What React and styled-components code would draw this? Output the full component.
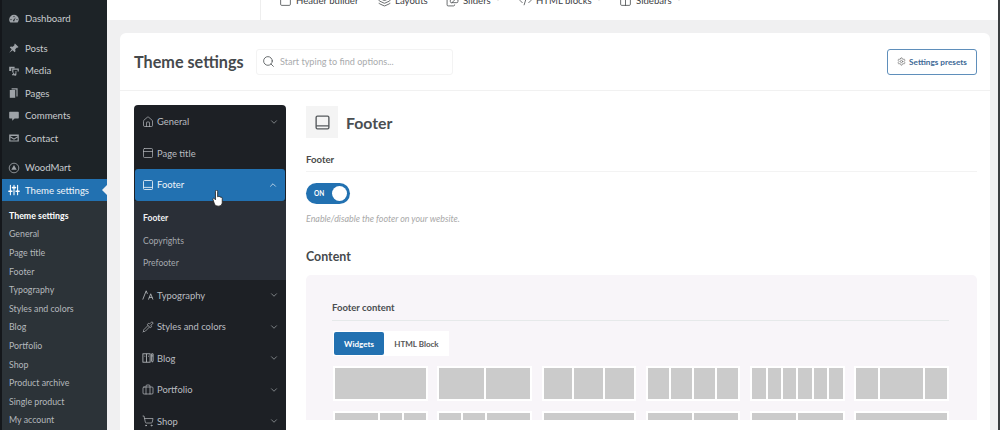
import React from "react";
import styled, { createGlobalStyle } from "styled-components";
import { Home, PanelTop, ChevronDown, ChevronUp, Search, Settings, Briefcase, ShoppingCart, Pipette, Layers, Images, CodeXml, Columns2, Square, ChevronDown as Caret } from "lucide-react";

const Global = createGlobalStyle`
  html, body { margin: 0; padding: 0; background: #f0f0f1; overflow: hidden; }
  * { box-sizing: border-box; }
  body { font-family: "Lato", "Open Sans", sans-serif; }
`;

const Page = styled.div`
  display: flex; width: 1000px; height: 430px; overflow: hidden;
  background: #f0f0f1; border-right: 2px solid #3a3d40;
`;
const Sidebar = styled.aside`
  width: 107px; flex: none; display: flex; flex-direction: column;
  background: #1d2327; border-left: 2px solid #14171b; padding-top: 7.5px;
`;
const SideItem = styled.div`
  display: flex; align-items: center; gap: 5px; height: ${p => p.$h || 22.5}px;
  margin-top: ${p => p.$mt || 0}px; padding-left: 6px; font-size: 9.6px;
  color: ${p => p.$active ? "#f2f6fa" : "#c8cbce"}; background: ${p => p.$active ? "#2271b1" : "transparent"};
  position: relative; white-space: nowrap;
  svg { flex: none; width: 12px; height: 12px; }
  ${p => p.$active ? `&::after { content: ""; position: absolute; right: 0; top: 6px; border: 5px solid transparent; border-right-color: #f0f0f1; border-left: 0; }` : ""}
`;
const SubMenu = styled.div`
  flex: 1; background: #2c3338; padding-top: 5.5px; display: flex; flex-direction: column;
`;
const SubItem = styled.div`
  height: 18.6px; line-height: 18.6px; padding-left: 7px; font-size: 8.8px; white-space: nowrap;
  color: ${p => p.$on ? "#fff" : "#b4b8bc"}; font-weight: ${p => p.$on ? 700 : 400};
`;
const Main = styled.main`
  flex: 1; min-width: 0; display: flex; flex-direction: column;
`;
const TopBar = styled.div`
  height: 20px; flex: none; background: #fff; overflow: hidden; padding-left: 153px;
`;
const TopNav = styled.nav`
  height: 20px; border-left: 1px solid #eee; padding-left: 18px; display: flex; align-items: flex-start;
`;
const TopLink = styled.div`
  display: flex; align-items: center; gap: 4px; height: 14px; margin-top: -7px; width: ${p => p.$w}px;
  font-size: 9.6px; color: #3d4144; white-space: nowrap;
  svg { flex: none; width: 13px; height: 13px; stroke-width: 1.4; }
  svg.caret { width: 6px; height: 6px; color: #aaa; margin-left: 0; }
`;
const Card = styled.section`
  flex: 1; min-height: 0; margin: 13px 8px 0 13px; background: #fff; border-radius: 6px 6px 0 0; overflow: hidden;
`;
const Header = styled.header`
  height: 58px; display: flex; align-items: center; padding: 0 13px 0 14px; border-bottom: 1px solid #f1f1f1;
`;
const Title = styled.h1`
  margin: 0; width: 122px; font-size: 16.2px; font-weight: 700; color: #45494c; white-space: nowrap;
`;
const SearchBox = styled.div`
  width: 197px; height: 26px; display: flex; align-items: center; gap: 5px; padding-left: 5px;
  border: 1px solid #f3f3f3; border-radius: 3px; font-size: 9.1px; color: #a9abad;
  svg { width: 13px; height: 13px; color: #55595c; stroke-width: 1.6; }
`;
const PresetBtn = styled.button`
  margin-left: auto; width: 90px; height: 26px; display: flex; align-items: center; justify-content: center; gap: 3px;
  background: #fff; border: 1px solid #5f8fbb; border-radius: 3px; color: #3e6a96;
  font: 700 8.2px "Lato", sans-serif; white-space: nowrap;
  svg { width: 9px; height: 9px; color: #777; }
`;
const Body = styled.div`
  display: flex; padding: 14px 13px 0 14px; gap: 20px;
`;
const Nav = styled.nav`
  width: 152px; flex: none; height: 340px; background: #1d2025; border-radius: 4px 4px 0 0; position: relative; padding-top: 1px;
`;
const NavRow = styled.div`
  height: 31.5px; margin: 0 ${p => p.$on ? 1 : 0}px; display: flex; align-items: center; gap: 3px; padding-left: ${p => p.$on ? 7 : 8}px; padding-right: 7px;
  background: ${p => p.$on ? "#2271b1" : "transparent"}; border-radius: ${p => p.$on ? 3 : 0}px;
  color: ${p => p.$on ? "#eef4f9" : "#b9bcc0"}; font-size: 9.4px; white-space: nowrap;
  svg { flex: none; width: 12px; height: 12px; stroke-width: 1.4; }
  svg.chev { width: 10px; height: 10px; margin-left: auto; stroke-width: 2; color: #8f9498; }
`;
const NavSub = styled.div`
  background: #2a2f37; height: 79px; padding: 6.5px 0 0 9px; display: flex; flex-direction: column;
`;
const NavSubItem = styled.div`
  height: 22.5px; line-height: 22.5px; font-size: 8.6px; font-weight: ${p => p.$on ? 700 : 400};
  color: ${p => p.$on ? "#eef0f2" : "#a4a8ad"};
`;
const Pointer = styled.svg`
  position: absolute; left: 78px; top: 85px; width: 12px; height: 17px;
`;
const Content = styled.div`
  flex: 1; min-width: 0;
`;
const PageHead = styled.div`
  display: flex; align-items: center; gap: 8px; height: 32px; margin-top: 1px;
`;
const IconBox = styled.div`
  width: 32px; height: 32px; background: #f4f4f4; display: flex; align-items: center; justify-content: center;
  color: #55595c; svg { width: 17px; height: 17px; }
`;
const H2 = styled.h2`
  margin: 0; font-size: 15.8px; font-weight: 700; color: #4a4e51;
`;
const Label = styled.div`
  margin-top: 15px; height: 19px; font-size: 9.6px; font-weight: 700; color: #4a4a4a; border-bottom: 1px solid #f3f3f3; line-height: 14px;
`;
const Toggle = styled.div`
  margin-top: 11px; width: 44px; height: 21px; background: #2271b1; border-radius: 11px; display: flex; align-items: center;
  padding: 0 3px 0 8px; justify-content: space-between; font-size: 6.5px; font-weight: 700; color: #fff;
`;
const Knob = styled.span`
  width: 15px; height: 15px; border-radius: 50%; background: #fff;
`;
const Hint = styled.div`
  margin-top: 9px; font-size: 8.9px; font-style: italic; color: #a8a8a8; line-height: 11px;
`;
const H3 = styled.h3`
  margin: 24px 0 0; font-size: 12.4px; font-weight: 700; color: #45494c; line-height: 17px;
`;
const Panel = styled.div`
  margin-top: 10px; height: 145px; overflow: hidden; background: #f8f5f9; border-radius: 5px 5px 0 0; padding: 26px 28px 0 26px;
`;
const PanelTitle = styled.div`
  font-size: 9.5px; font-weight: 700; color: #4a4e51; height: 20px; line-height: 14px; border-bottom: 1px solid #e6e9ea;
`;
const Tabs = styled.div`
  margin: 10px 0 0 1px; width: 116px; height: 25px; background: #fff; display: flex; align-items: center; padding-left: 1px;
`;
const Tab = styled.div`
  width: ${p => p.$w}px; height: 23px; display: flex; align-items: center; justify-content: center; font-size: 8px; font-weight: 700;
  border-radius: 2px; color: ${p => p.$on ? "#fff" : "#555"}; background: ${p => p.$on ? "#2271b1" : "transparent"};
`;
const Grid = styled.div`
  margin: 10px 0 0 1px; display: grid; grid-template-columns: repeat(6, 94.5px); column-gap: 9.8px; row-gap: 10px;
`;
const Layout = styled.div`
  height: 35px; background: #fff; padding: 2px; display: flex; gap: 2px;
`;
const Col = styled.span`
  flex: ${p => p.$f}; background: #cbcbcb;
`;

const sidebarIcon = {
  dash: <svg viewBox="0 0 20 20" fill="#9ea3a8"><path d="M10 3a8 8 0 0 0-8 8c0 2 .8 3.900 2 5h12a8 8 0 0 0 2-5 8 8 0 0 0-8-8zm0 2a1 1 0 1 1 0 2 1 1 0 0 1 0-2zM5 10a1 1 0 1 1 0 2 1 1 0 0 1 0-2zm10 0a1 1 0 1 1 0 2 1 1 0 0 1 0-2zm-5 4a1.500 1.500 0 0 1-.8-2.800L13 7l-2.200 5.200A1.500 1.500 0 0 1 10 14z" fillRule="evenodd"/></svg>,
  pin: <svg viewBox="0 0 20 20" fill="#9ea3a8"><path d="M11.500 2.500l6 6-1.500 1-1-.5-3 3 .5 3.500-1.500 1.500-3.200-3.200L2 18l4.200-5.800L3 9l1.500-1.500L8 8l3-3-.5-1z"/></svg>,
  media: <svg viewBox="0 0 20 20" fill="#9ea3a8"><path d="M2 3h9v2.500H5.500V10H2zM7 6h11v5h-2V8H9v4.500H7zM14 10v6a2 2 0 1 1-1.500-1.900V10zM10 13v3a1.600 1.600 0 1 1-1.500-1.600V13z"/></svg>,
  pages: <svg viewBox="0 0 20 20" fill="#9ea3a8"><path d="M6 2h10v14h-2V4H6z"/><path d="M3 5h9v13H3z"/></svg>,
  comment: <svg viewBox="0 0 20 20" fill="#9ea3a8"><path d="M3 3h14a1 1 0 0 1 1 1v9a1 1 0 0 1-1 1h-6l-4 4v-4H3a1 1 0 0 1-1-1V4a1 1 0 0 1 1-1z"/></svg>,
  mail: <svg viewBox="0 0 20 20" fill="#9ea3a8"><path d="M2 4h16v12H2zm2 2.500V7l6 4 6-4v-.5zM4 9v5h12V9l-6 4z" fillRule="evenodd"/></svg>,
  wood: <svg viewBox="0 0 20 20" fill="none" stroke="#9ea3a8" strokeWidth="1.400"><circle cx="10" cy="10" r="8"/><path d="M10 5l4.500 8h-9z" fill="#9ea3a8" stroke="none"/></svg>,
  sliders: <svg viewBox="0 0 20 20" fill="none" stroke="#fff" strokeWidth="1.800" strokeLinecap="round"><path d="M4 2v16M10 2v16M16 2v16"/><path d="M1.500 12h5M7.500 6h5M13.500 12h5" strokeWidth="2.600"/></svg>,
};

const FooterIcon = () => (
  <svg viewBox="0 0 20 20" fill="none" stroke="currentColor" strokeWidth="1.600" strokeLinejoin="round"><rect x="2.500" y="2.500" width="15" height="15" rx="1.500"/><path d="M2.500 14h15"/></svg>
);
const TypeIcon = () => (
  <svg viewBox="0 0 20 20" fill="none" stroke="currentColor" strokeWidth="1.500" strokeLinecap="round"><path d="M1.500 17L7 3l1.800 4.500M11 17l3.500-9 3.500 9M12.200 14h4.600"/></svg>
);
const BlogIcon = () => (
  <svg viewBox="0 0 20 20" fill="none" stroke="currentColor" strokeWidth="1.500"><rect x="1.500" y="3" width="12" height="14"/><path d="M7.500 3v14M4 7h1.500M10 7h1.500M16 3h2.500v12l-1.200 2-1.300-2zM16 6.500h2.500"/></svg>
);

const Top = ({ icon, text, w, caret }) => (
  <TopLink $w={w}>{icon}{text}{caret && <Caret className="caret" />}</TopLink>
);

const Row = ({ icon, text, on, open, none }) => (
  <NavRow $on={on}>{icon}{text}{!none && (open ? <ChevronUp className="chev" style={{ color: "#cfe0ee" }} /> : <ChevronDown className="chev" />)}</NavRow>
);

const layouts = [
  [1], [1, 1], [1, 1, 1], [1, 1, 1, 1], [1, 1, 1, 1, 1, 1], [1, 2, 1],
  [2, 1, 1], [1, 1, 2], [1], [1, 1], [1, 1], [1],
];
const subs = ["General", "Page title", "Footer", "Typography", "Styles and colors", "Blog", "Portfolio", "Shop", "Product archive", "Single product", "My account"];

export default function App() {
  return (
    <>
      <Global />
      <Page>
        <Sidebar>
          <SideItem>{sidebarIcon.dash}Dashboard</SideItem>
          <SideItem $mt={7}>{sidebarIcon.pin}Posts</SideItem>
          <SideItem>{sidebarIcon.media}Media</SideItem>
          <SideItem>{sidebarIcon.pages}Pages</SideItem>
          <SideItem>{sidebarIcon.comment}Comments</SideItem>
          <SideItem>{sidebarIcon.mail}Contact</SideItem>
          <SideItem $mt={7}>{sidebarIcon.wood}WoodMart</SideItem>
          <SideItem $active>{sidebarIcon.sliders}Theme settings</SideItem>
          <SubMenu>
            <SubItem $on>Theme settings</SubItem>
            {subs.map(s => <SubItem key={s}>{s}</SubItem>)}
          </SubMenu>
        </Sidebar>
        <Main>
          <TopBar>
            <TopNav>
              <Top icon={<Square />} text="Header builder" w={99} />
              <Top icon={<Layers />} text="Layouts" w={68} />
              <Top icon={<Images />} text="Sliders" w={73} caret />
              <Top icon={<CodeXml />} text="HTML blocks" w={100} caret />
              <Top icon={<Columns2 />} text="Sidebars" w={70} caret />
            </TopNav>
          </TopBar>
          <Card>
            <Header>
              <Title>Theme settings</Title>
              <SearchBox><Search />Start typing to find options...</SearchBox>
              <PresetBtn><Settings />Settings presets</PresetBtn>
            </Header>
            <Body>
              <Nav>
                <Row icon={<Home />} text="General" />
                <Row icon={<PanelTop />} text="Page title" none />
                <Row icon={<FooterIcon />} text="Footer" on open />
                <NavSub>
                  <NavSubItem $on>Footer</NavSubItem>
                  <NavSubItem>Copyrights</NavSubItem>
                  <NavSubItem>Prefooter</NavSubItem>
                </NavSub>
                <Row icon={<TypeIcon />} text="Typography" />
                <Row icon={<Pipette />} text="Styles and colors" />
                <Row icon={<BlogIcon />} text="Blog" />
                <Row icon={<Briefcase />} text="Portfolio" />
                <Row icon={<ShoppingCart />} text="Shop" />
                <Pointer viewBox="0 0 14 20">
                  <path d="M4 1.500a1.300 1.300 0 0 1 2.600 0V8l1-.3c.8-.2 1.500 0 1.700.5l1.300.2c.8 0 1.400.5 1.400 1.300v5c0 2.500-1.500 4.300-4.500 4.300S3.500 18 2.500 15.500L1 11c-.3-1 1-1.700 1.800-.8L4 11.500z" fill="#fff" stroke="#222" strokeWidth="1" />
                </Pointer>
              </Nav>
              <Content>
                <PageHead><IconBox><FooterIcon /></IconBox><H2>Footer</H2></PageHead>
                <Label>Footer</Label>
                <Toggle>ON<Knob /></Toggle>
                <Hint>Enable/disable the footer on your website.</Hint>
                <H3>Content</H3>
                <Panel>
                  <PanelTitle>Footer content</PanelTitle>
                  <Tabs>
                    <Tab $on $w={50}>Widgets</Tab>
                    <Tab $w={65}>HTML Block</Tab>
                  </Tabs>
                  <Grid>
                    {layouts.map((cols, i) => (
                      <Layout key={i}>{cols.map((f, j) => <Col key={j} $f={f} />)}</Layout>
                    ))}
                  </Grid>
                </Panel>
              </Content>
            </Body>
          </Card>
        </Main>
      </Page>
    </>
  );
}
